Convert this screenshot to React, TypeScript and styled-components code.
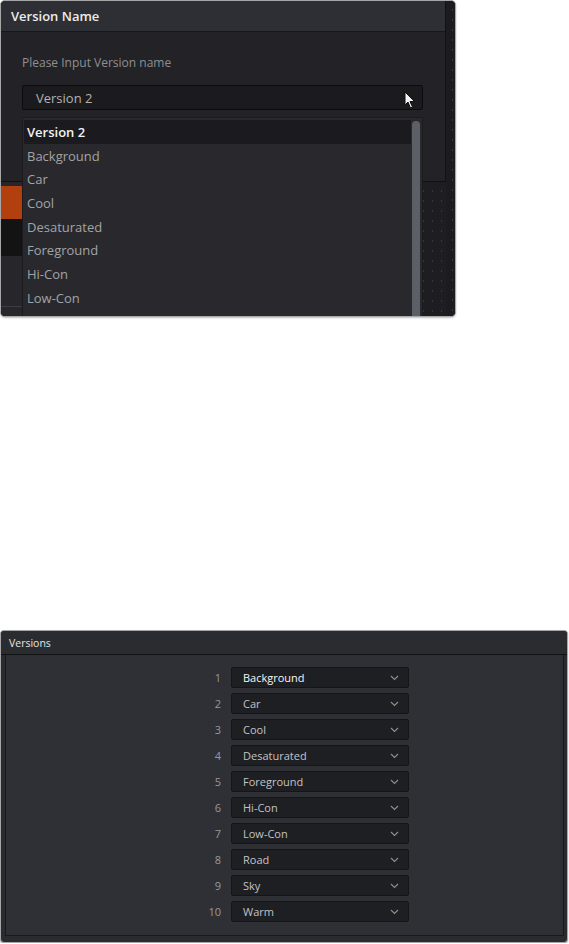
import React from "react";
import styled, { createGlobalStyle } from "styled-components";

const Global = createGlobalStyle`
  html, body { margin: 0; padding: 0; background: #ffffff; }
  body { font-family: "Open Sans", "Noto Sans", sans-serif; }
  * { box-sizing: border-box; }
`;

const Page = styled.div`
  display: flex;
  flex-direction: column;
  align-items: flex-start;
`;

/* ---------- Top screenshot ---------- */
const TopShot = styled.div`
  position: relative;
  width: 456px;
  height: 317px;
  border: 1px solid #a7a7a9;
  border-radius: 5px;
  overflow: hidden;
  display: flex;
  background: #1d1d21;
  box-shadow: 0 1px 2px rgba(0, 0, 0, 0.25);
`;

const MainCol = styled.div`
  flex: 1;
  display: flex;
  flex-direction: column;
`;

const DotStrip = styled.div`
  width: 9px;
  background-color: #1c1c20;
  background-image: radial-gradient(#3b3b42 0.8px, transparent 1px);
  background-size: 9px 10px;
  background-position: 2px 4px;
`;

const Dialog = styled.div`
  height: 181px;
  display: flex;
  flex-direction: column;
  border-right: 1px solid #111113;
  border-bottom: 1px solid #111113;
`;

const DialogTitle = styled.div`
  height: 31px;
  flex: none;
  display: flex;
  align-items: center;
  padding-left: 10px;
  background: #2e2f34;
  border-bottom: 1px solid #17171a;
  color: #ececec;
  font-size: 13px;
  font-weight: 600;
`;

const DialogBody = styled.div`
  flex: 1;
  background: #232327;
  padding: 22px 22px 0 21px;
  display: flex;
  flex-direction: column;
`;

const Label = styled.div`
  color: #8f8f93;
  font-size: 12px;
  line-height: 17px;
`;

const InputBox = styled.div`
  position: relative;
  margin-top: 14px;
  height: 25px;
  width: 401px;
  background: #1b1b1e;
  border: 1px solid #0c0c0e;
  border-radius: 2px;
  display: flex;
  align-items: center;
  padding-left: 13px;
  color: #b2b2b4;
  font-size: 13px;
`;

const Cursor = styled.svg`
  position: absolute;
  left: 381px;
  top: 5px;
`;

const AppArea = styled.div`
  flex: 1;
  display: flex;
  background-color: #1e1e22;
  background-image: radial-gradient(#36363c 0.8px, transparent 1px);
  background-size: 9px 10px;
  background-position: 4px 4px;
`;

const SideStrip = styled.div`
  width: 21px;
  display: flex;
  flex-direction: column;
  background: #27272b;
`;

const SideBlock = styled.div<{ $h: number; $c: string }>`
  height: ${(p) => p.$h}px;
  background: ${(p) => p.$c};
  flex: none;
`;

const SideLine = styled.div`
  margin-top: auto;
  margin-bottom: 9px;
  height: 1px;
  background: #3c3d42;
`;

const Menu = styled.div`
  position: absolute;
  left: 21px;
  top: 116px;
  width: 401px;
  height: 210px;
  background: #29292d;
  border: 1px solid #1b1b1e;
  padding: 2px 0 0 1px;
  display: flex;
`;

const MenuList = styled.div`
  flex: 1;
  display: flex;
  flex-direction: column;
`;

const MenuItem = styled.div<{ $active?: boolean }>`
  flex: none;
  height: 23.7px;
  display: flex;
  align-items: center;
  padding-left: 3px;
  font-size: 13px;
  color: ${(p) => (p.$active ? "#f2f2f2" : "#a3a3a6")};
  font-weight: ${(p) => (p.$active ? 600 : 400)};
  background: ${(p) => (p.$active ? "#1b1b1f" : "transparent")};
`;

const ScrollTrack = styled.div`
  width: 11px;
  padding: 1px 2px 0 1px;
`;

const ScrollThumb = styled.div`
  height: 100%;
  background: #5c6066;
  border-radius: 4px;
`;

/* ---------- Bottom screenshot ---------- */
const BottomShot = styled.div`
  margin-top: 313px;
  width: 568px;
  height: 313px;
  border: 1px solid #a7a7a9;
  border-radius: 4px;
  overflow: hidden;
  background: #2a2b2f;
  display: flex;
  flex-direction: column;
  box-shadow: 0 1px 2px rgba(0, 0, 0, 0.25);
`;

const PanelTitle = styled.div`
  height: 24px;
  flex: none;
  display: flex;
  align-items: center;
  padding-left: 8px;
  background: #2b2c30;
  border-bottom: 1px solid #111214;
  color: #e4e4e6;
  font-size: 10.5px;
`;

const PanelBody = styled.div`
  flex: 1;
  padding: 0 3px 6px 4px;
  display: flex;
`;

const Inner = styled.div`
  flex: 1;
  background: #2e3035;
  border: 1px solid #18191c;
  border-top: none;
  padding: 12px 0 0 175px;
  display: flex;
  flex-direction: column;
  gap: 5px;
`;

const Row = styled.div`
  display: flex;
  align-items: center;
  height: 21px;
`;

const Num = styled.div`
  width: 40px;
  text-align: right;
  color: #98999d;
  font-size: 11px;
`;

const Select = styled.div<{ $bright?: boolean }>`
  margin-left: 10px;
  width: 178px;
  height: 21px;
  background: #1e1f22;
  border: 1px solid #141518;
  border-radius: 2px;
  display: flex;
  align-items: center;
  padding: 0 9px 0 11px;
  font-size: 11px;
  color: ${(p) => (p.$bright ? "#f7f7f9" : "#c2c3c6")};
  font-weight: ${(p) => (p.$bright ? 500 : 400)};
`;

const SelectText = styled.span`
  flex: 1;
`;

const Chevron = () => (
  <svg width="9" height="6" viewBox="0 0 9 6">
    <polyline points="1,1 4.5,4.5 8,1" fill="none" stroke="#8b8c90" strokeWidth="1.2" />
  </svg>
);

const menuItems = ["Version 2", "Background", "Car", "Cool", "Desaturated", "Foreground", "Hi-Con", "Low-Con"];
const versions = ["Background", "Car", "Cool", "Desaturated", "Foreground", "Hi-Con", "Low-Con", "Road", "Sky", "Warm"];

export default function App() {
  return (
    <Page>
      <Global />
      <TopShot>
        <MainCol>
          <Dialog>
            <DialogTitle>Version Name</DialogTitle>
            <DialogBody>
              <Label>Please Input Version name</Label>
              <InputBox>
                Version 2
                <Cursor width="12" height="19" viewBox="0 0 12 19">
                  <path
                    d="M1 1 L1 14 L4 11 L6.5 17 L8.5 16 L6 10.5 L10.5 10.5 Z"
                    fill="#f4f4f4"
                    stroke="#111"
                    strokeWidth="1"
                    strokeLinejoin="round"
                  />
                </Cursor>
              </InputBox>
            </DialogBody>
          </Dialog>
          <AppArea>
            <SideStrip>
              <SideBlock $h={4} $c="#27272b" />
              <SideBlock $h={33} $c="#b2400f" />
              <SideBlock $h={37} $c="#131314" />
              <SideLine />
            </SideStrip>
          </AppArea>
        </MainCol>
        <DotStrip />
        <Menu>
          <MenuList>
            {menuItems.map((m, i) => (
              <MenuItem key={m} $active={i === 0}>
                {m}
              </MenuItem>
            ))}
          </MenuList>
          <ScrollTrack>
            <ScrollThumb />
          </ScrollTrack>
        </Menu>
      </TopShot>

      <BottomShot>
        <PanelTitle>Versions</PanelTitle>
        <PanelBody>
          <Inner>
            {versions.map((v, i) => (
              <Row key={v}>
                <Num>{i + 1}</Num>
                <Select $bright={i === 0}>
                  <SelectText>{v}</SelectText>
                  <Chevron />
                </Select>
              </Row>
            ))}
          </Inner>
        </PanelBody>
      </BottomShot>
    </Page>
  );
}
